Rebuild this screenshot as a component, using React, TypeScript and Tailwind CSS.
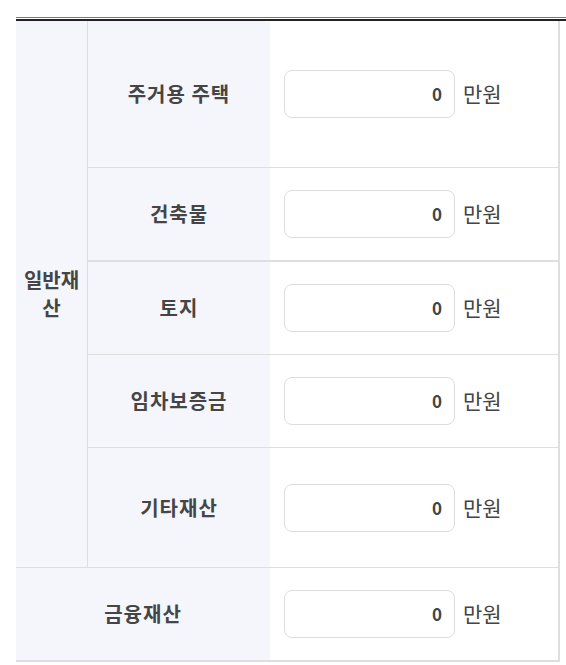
import React from "react";

const font = { fontFamily: '"Noto Sans CJK KR", "Noto Sans", sans-serif' };

function Amount() {
  return (
    <div className="flex items-center pl-[14px]">
      <div className="w-[171px] h-[48px] rounded-[8px] border border-[#dddddd] bg-white flex items-center justify-end pr-[12px]">
        <span className="text-[17px] font-bold text-[#444444]">0</span>
      </div>
      <span className="ml-[8px] text-[21px] text-[#444444]">만원</span>
    </div>
  );
}

function Row({ label, h, border }: { label: string; h: string; border: string }) {
  return (
    <div className={`flex ${h} ${border} border-[#dedede]`}>
      <div className="w-[182px] bg-[#f5f6fb] flex items-center justify-center">
        <span className="text-[20px] font-bold text-[#454545] tracking-[1px]">{label}</span>
      </div>
      <div className="flex-1 flex items-center">
        <Amount />
      </div>
    </div>
  );
}

export default function App() {
  return (
    <div className="w-[566px] h-[665px] bg-white overflow-hidden pt-[17px] pl-[16px]" style={font}>
      <div className="h-px bg-[#777777]" />
      <div className="h-px bg-white" />
      <div className="h-[2px] bg-[#222222]" />
      <div className="flex">
        <div className="w-[542px] flex flex-col">
          <div className="flex border-b border-[#dedede]">
            <div className="w-[72px] bg-[#f5f6fb] border-r border-[#dedede] flex items-center justify-center text-center">
              <span className="text-[20px] font-bold text-[#454545] leading-[28px] px-[3px]">일반재산</span>
            </div>
            <div className="flex-1 flex flex-col">
              <Row label="주거용 주택" h="h-[147px]" border="border-b" />
              <Row label="건축물" h="h-[94px]" border="border-b-2" />
              <Row label="토지" h="h-[93px]" border="border-b" />
              <Row label="임차보증금" h="h-[93px]" border="border-b" />
              <Row label="기타재산" h="h-[119px]" border="" />
            </div>
          </div>
          <div className="flex h-[94px] border-b-2 border-[#dedede]">
            <div className="w-[254px] bg-[#f5f6fb] flex items-center justify-center">
              <span className="text-[20px] font-bold text-[#454545] tracking-[1px]">금융재산</span>
            </div>
            <div className="flex-1 flex items-center">
              <Amount />
            </div>
          </div>
        </div>
        <div className="w-[2px] bg-[#dedede]" />
      </div>
    </div>
  );
}
